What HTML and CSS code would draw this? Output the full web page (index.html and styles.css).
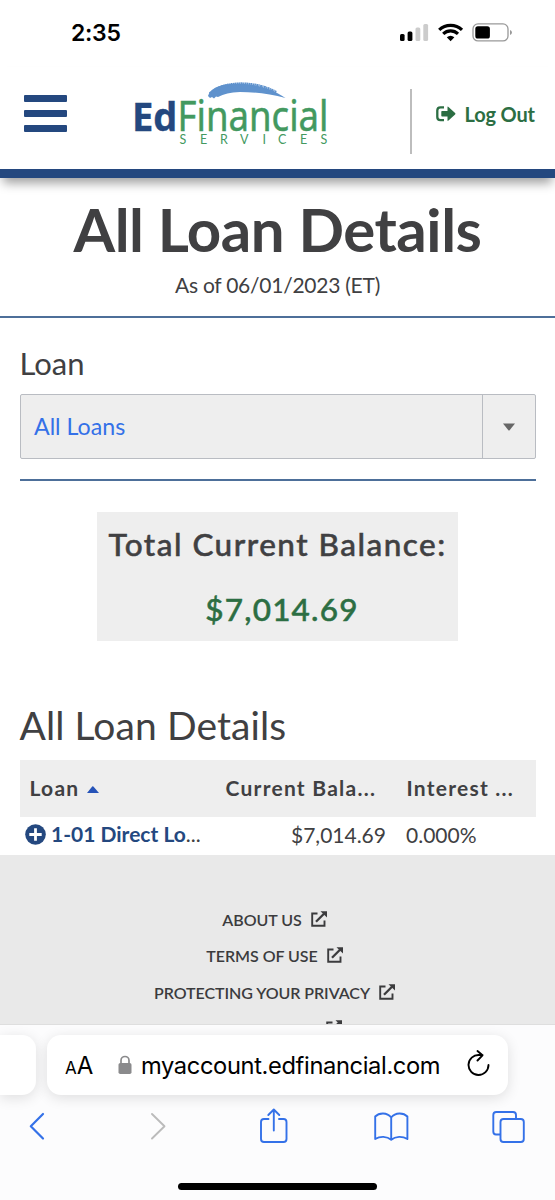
FILE: index.html
```html
<!DOCTYPE html>
<html lang="en">
<head>
<meta charset="utf-8">
<title>All Loan Details</title>
<link rel="stylesheet" href="styles.css">
</head>
<body>
<div class="phone">
  <div class="status">
    <span class="clock">2:35</span>
    <svg class="status-icons" width="116" height="24" viewBox="0 0 116 24">
      <rect x="1" y="13" width="4.6" height="7" rx="1.5"/>
      <rect x="8.6" y="10.5" width="4.8" height="9.5" rx="1.5"/>
      <rect x="16.5" y="6.5" width="4.8" height="13.5" rx="1.5" fill="#ccc"/>
      <rect x="24.3" y="3" width="4.8" height="17" rx="1.5" fill="#ccc"/>
      <g fill="none" stroke="#000" stroke-width="3.2">
        <path d="M40.2 8.9a16.6 16.6 0 0 1 22.8 0"/>
        <path d="M44.2 12.8a10.8 10.8 0 0 1 14.8 0"/>
      </g>
      <path d="M47.8 16.3a5.8 5.8 0 0 1 7.6 0l-3.8 4z"/>
      <rect x="74" y="2.9" width="35" height="17" rx="5" fill="none" stroke="#999" stroke-width="1.3"/>
      <rect x="76.3" y="5.2" width="14.6" height="12.4" rx="2.6"/>
      <path d="M111 9v5q2-.8 2-2.5T111 9z" fill="#999"/>
    </svg>
  </div>

  <header class="header">
    <div class="burger"><i></i><i></i><i></i></div>
    <svg class="logo" width="200" height="68" viewBox="0 0 200 68">
      <path d="M75 17C77 10 86 5.500 98 5C122 3.500 140 10 152.500 19C137 14.500 121 13 107 13C97 13.500 91 15 85 18L83 17.500L81 19.500L79 18L77 19Z" fill="#5f92cd"/>
      <path d="M77 15C85 8 94 6 104 5.200C120 4.500 132 8 143 13.500" fill="none" stroke="#5f92cd" stroke-width="3.500" stroke-dasharray="1.200 .4 2 .3"/>
      <text x="-1" y="51.500" class="logo-ed" textLength="45.500" lengthAdjust="spacingAndGlyphs">Ed</text>
      <text x="44.500" y="51.500" class="logo-fin" textLength="151" lengthAdjust="spacingAndGlyphs">Financial</text>
      <text y="65" class="logo-sub" x="46.500 67 87 107 129.500 145 167 187.500">SERVICES</text>
    </svg>
    <span class="divider"></span>
    <a class="logout">
      <svg width="20" height="16" viewBox="0 0 20 16"><path d="M8 1.300H4.500Q1.300 1.300 1.300 4.500v6.500Q1.300 14.200 4.500 14.200H8" fill="none" stroke="#2c6e43" stroke-width="2.300"/><path d="M6 5h5.500V1.200Q11.500 0 12.500 1l6.600 6q.8.700 0 1.500l-6.600 6q-1 .9-1-.3V10.500H6Q5.300 10.500 5.300 9.800V5.700Q5.300 5 6 5z" fill="#2c6e43"/></svg>
      <span>Log Out</span>
    </a>
  </header>

  <main>
    <section class="title-block">
      <h1>All Loan Details</h1>
      <p>As of 06/01/2023 (ET)</p>
    </section>
    <section class="content">
      <label class="field-label">Loan</label>
      <div class="select">
        <span class="select-value">All Loans</span>
        <span class="select-arrow"><svg width="14" height="8" viewBox="0 0 14 8"><path d="M1 .5h12L7.600 7.300q-.6.600-1.200 0z" fill="#666"/></svg></span>
      </div>
      <div class="rule"></div>
      <div class="balance">
        <div class="balance-label">Total Current Balance:</div>
        <div class="balance-value">$7,014.69</div>
      </div>
      <h2>All Loan Details</h2>
      <div class="row head">
        <span class="c-loan">Loan <svg width="12" height="7" viewBox="0 0 12 7"><path d="M0 7L5.200.6q.6-.6 1.200 0L12 7z" fill="#2653b8"/></svg></span>
        <span class="c-bal">Current Bala...</span>
        <span class="c-rate">Interest ...</span>
      </div>
      <div class="row body">
        <span class="c-link"><svg width="21" height="21" viewBox="0 0 21 21"><circle cx="10.500" cy="10.500" r="10.300" fill="#24487f"/><path d="M10.500 4.300v12.400M4.300 10.500h12.400" stroke="#fff" stroke-width="2.800"/></svg><span class="link-text"><b>1-01 Direct Lo</b>...</span></span>
        <span class="c-amount">$7,014.69</span>
        <span class="c-pct">0.000%</span>
      </div>
    </section>
  </main>

  <footer class="footer">
    <svg class="defs" width="0" height="0"><symbol id="ext" viewBox="0 0 16 16"><path d="M6.500 2.500H1.200V14.800H13.500V9.500" fill="none" stroke="#3b3b3d" stroke-width="1.900"/><path d="M5 10.800L13 2.800" stroke="#3b3b3d" stroke-width="2.300"/><path d="M9.500.2H16V6.500z" fill="#3b3b3d"/></symbol></svg>
    <a><span>ABOUT US</span><svg class="ext"><use href="#ext"/></svg></a>
    <a><span>TERMS OF USE</span><svg class="ext"><use href="#ext"/></svg></a>
    <a><span>PROTECTING YOUR PRIVACY</span><svg class="ext"><use href="#ext"/></svg></a>
    <a><span>ACCESSIBILITY</span><svg class="ext"><use href="#ext"/></svg></a>
  </footer>

  <div class="browser">
    <div class="tabs">
      <div class="prev-tab"></div>
      <div class="address">
        <span class="aa"><small>A</small>A</span>
        <svg class="lock" width="14" height="20" viewBox="0 0 14 20"><rect x=".5" y="8" width="13" height="11" rx="1.800" fill="#8a8a8c"/><path d="M3 9V5.500a4 4 0 0 1 8 0V9" fill="none" stroke="#8a8a8c" stroke-width="1.700"/></svg>
        <span class="url">myaccount.edfinancial.com</span>
        <svg class="reload" width="24" height="28" viewBox="0 0 24 28"><path d="M12 5A10 10 0 1 0 21.500 15M10.500 1L15.500 5.300L10.500 10.500M12 5H15.500" fill="none" stroke="#000" stroke-width="1.900" stroke-linecap="round" stroke-linejoin="round"/></svg>
      </div>
    </div>
    <svg class="tools" width="555" height="50" viewBox="0 0 555 50" fill="none" stroke="#3471e8" stroke-width="1.900" stroke-linecap="round" stroke-linejoin="round">
      <path d="M43 14L30.800 26.300L43 38.500" stroke-width="2.200"/>
      <path d="M152 14L164.500 26.300L152 38.500" stroke="#bbb"/>
      <path d="M268.500 19H264Q261 19 261 22V39Q261 42 264 42H283.500Q286.500 42 286.500 39V22Q286.500 19 283.500 19H279M273.800 30.500V9.500M268.300 15L273.800 9.500L279.300 15"/>
      <path d="M391.200 17.500C387 12 379 12.500 375.200 16.500V39C380 36 387 36 391.200 39.800C395.500 36 402.500 36 407.400 39V16.500C403.500 12.500 395.500 12 391.200 17.500V39.500"/>
      <path d="M500 34.500H496Q493.300 34.500 493.300 31.500V15Q493.300 12 496.300 12H513Q516 12 516 15V18.500"/>
      <rect x="500.500" y="19" width="23.300" height="23" rx="3"/>
    </svg>
    <div class="home"></div>
  </div>
</div>
</body>
</html>
```
FILE: styles.css
```css
* { box-sizing: border-box; }
body { margin: 0; background: #fff; font-family: Lato, sans-serif; color: #404042; }
.phone { width: 555px; height: 1200px; overflow: hidden; display: flex; flex-direction: column; }
.phone > * { flex-shrink: 0; }
svg { display: block; flex-shrink: 0; }
h1, h2, p { margin: 0; font-weight: 400; white-space: nowrap; }

.status { height: 67px; padding: 21px 40px 0 71px; display: flex; justify-content: space-between; }
.clock { font: 600 23px/25px Inter, sans-serif; letter-spacing: -.3px; color: #000; }

.header { height: 110.5px; border-bottom: 9px solid #24487f; display: flex; box-shadow: 0 8px 10px -3px rgba(0,0,0,.38); padding-left: 24px; }
.burger { width: 42.5px; padding-top: 28px; display: flex; flex-direction: column; gap: 8px; }
.burger i { height: 7px; border-radius: 1px; background: #24487f; }
.logo { margin: 12px 0 0 66.5px; overflow: visible; }
.logo-ed { font: 700 40px "Open Sans", "Noto Sans", sans-serif; fill: #24487f; stroke: #24487f; stroke-width: .4px; }
.logo-fin { font: 400 41.5px "Noto Sans", sans-serif; fill: #43995f; stroke: #43995f; stroke-width: .5px; }
.logo-sub { font: 400 12.5px Lato, sans-serif; fill: #43995f; }
.divider { width: 2px; height: 65px; margin: 22px 0 0 77px; background: #bdbdbd; }
.logout { display: flex; gap: 9px; margin: 35px 0 0 23.5px; font-size: 20px; line-height: 24px; font-weight: 700; letter-spacing: -.15px; color: #2c6e43; white-space: nowrap; }
.logout svg { margin-top: 4px; }

.title-block { height: 140.5px; padding-top: 16.5px; border-bottom: 2px solid #4d6f99; text-align: center; }
.title-block h1 { font-size: 60px; line-height: 70px; font-weight: 700; letter-spacing: -.45px; }
.title-block p { margin-top: 8px; font-size: 21px; line-height: 26px; letter-spacing: -.25px; }
.content { height: 537px; padding: 27px 19.5px 0; }
.field-label { display: block; font-size: 31px; line-height: 36px; height: 49px; }
.select { height: 65px; border: 1px solid #b9bcc2; border-radius: 2px; background: #eee; display: flex; }
.select-value { flex: 1; padding-left: 13.5px; font-size: 23.2px; line-height: 63px; color: #3471e8; }
.select-arrow { width: 53px; border-left: 1px solid #b9bcc2; display: flex; align-items: center; justify-content: center; }
.rule { height: 2px; margin-top: 20px; background: #4d6f99; }
.balance { width: 361px; height: 129px; margin: 31px auto 0; padding-top: 12px; background: #eee; text-align: center; white-space: nowrap; }
.balance-label, .balance-value { font-size: 31.5px; line-height: 40px; font-weight: 500; letter-spacing: 1.48px; -webkit-text-stroke: .5px currentColor; }
.balance-value { margin-top: 25px; padding-left: 9px; color: #2c6e43; letter-spacing: 1.2px; }
h2 { margin-top: 61px; font-size: 39px; line-height: 46px; letter-spacing: .1px; }
.row { display: flex; white-space: nowrap; }
.head { height: 57px; margin-top: 12px; background: #eee; font-size: 21px; line-height: 56px; font-weight: 700; letter-spacing: 1.25px; }
.c-loan { width: 206px; padding-left: 10px; display: flex; gap: 8px; }
.c-loan svg { margin-top: 26px; }
.c-bal { width: 181px; }
.body { font-size: 21px; line-height: 26px; padding: 4px 0 0 5px; }
.c-link { width: 266.5px; display: flex; gap: 5.5px; }
.c-link b { font-weight: 700; color: #24487f; }
.c-link svg { margin-top: 3px; }
.c-amount { width: 115px; padding-top: 1px; }
.c-pct { padding-top: 1px; }

.footer { height: 169px; padding: 47px 6px 0 0; background: #e9e9e9; overflow: hidden; display: flex; flex-direction: column; align-items: center; }
.defs { height: 0; }
.footer a { display: flex; gap: 9px; height: 36.3px; flex-shrink: 0; font-size: 16px; line-height: 36px; font-weight: 600; letter-spacing: -.05px; color: #3b3b3d; white-space: nowrap; }
.ext { width: 16px; height: 16px; margin-top: 9px; }

.browser { height: 176px; background: #fcfcfd; border-top: 1px solid #dedede; }
.tabs { display: flex; gap: 11px; padding-top: 10px; }
.prev-tab { width: 36px; height: 60px; background: #fff; border-radius: 0 14px 14px 0; box-shadow: 0 3px 14px rgba(0,0,0,.12); }
.address { width: 461px; height: 60px; background: #fff; border-radius: 14px; box-shadow: 0 3px 14px rgba(0,0,0,.12); display: flex; align-items: center; padding-left: 18px; font-family: Inter, sans-serif; color: #000; white-space: nowrap; }
.aa { width: 53px; font-size: 24px; }
.aa small { font-size: 17px; }
.url { width: 326px; margin-left: 9px; font-size: 23.7px; letter-spacing: -.37px; }
.reload { margin-top: -2px; }
.tools { margin-top: 5px; }
.home { width: 199px; height: 7px; margin: 33px auto 0; border-radius: 4px; background: #000; }
```
